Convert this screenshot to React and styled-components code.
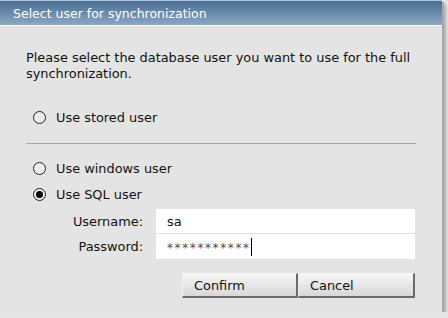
import React from "react";
import styled, { createGlobalStyle } from "styled-components";

const GlobalStyle = createGlobalStyle`
  html, body {
    margin: 0;
    padding: 0;
    background: #e6e6e6;
  }
  body {
    font-family: "DejaVu Sans", Verdana, sans-serif;
    font-size: 12.9px;
    color: #111;
  }
`;

const Dialog = styled.div`
  width: 442px;
  height: 312px;
  background: #e4e4e4;
  box-shadow: 2px 2px 0 #a8a8a8, 4px 4px 3px rgba(0, 0, 0, 0.25);
  display: flex;
  flex-direction: column;
`;

const TitleBar = styled.div`
  height: 24px;
  border-top: 1px solid #b4c4d6;
  border-bottom: 1px solid #ffffff;
  background: linear-gradient(#4b6e94, #8ba7c4);
  color: #ffffff;
  display: flex;
  align-items: center;
  padding-left: 13px;
  font-size: 12.5px;
`;

const Body = styled.div`
  padding: 24px 26px 0 26px;
  display: flex;
  flex-direction: column;
`;

const Spacer = styled.div`
  height: ${({ $h }) => $h}px;
  flex: none;
`;

const Intro = styled.p`
  margin: 0;
  line-height: 16px;
`;

const Separator = styled.hr`
  border: none;
  border-top: 1px solid #a9a9a9;
  margin: 0;
  width: 390px;
`;

const RadioRow = styled.label`
  display: flex;
  align-items: center;
  gap: 10px;
  height: 26px;
  padding-left: 7px;
`;

const RadioCircle = styled.span`
  width: 11px;
  height: 11px;
  border: 1px solid #222;
  border-radius: 50%;
  background: #ececec;
  display: flex;
  align-items: center;
  justify-content: center;
  &::after {
    content: "";
    width: 7px;
    height: 7px;
    border-radius: 50%;
    background: ${({ $checked }) => ($checked ? "#000" : "transparent")};
  }
`;

const Fields = styled.div`
  display: grid;
  grid-template-columns: 117px 259px;
  column-gap: 13px;
  margin-top: 2px;
`;

const FieldLabel = styled.div`
  height: 25px;
  display: flex;
  align-items: center;
  justify-content: flex-end;
`;

const FieldBox = styled.div`
  background: #ffffff;
  height: ${({ $first }) => ($first ? "24px" : "25px")};
  border-bottom: ${({ $first }) => ($first ? "1px solid #e2e2e2" : "none")};
  display: flex;
  align-items: center;
  padding-left: 11px;
`;

const Stars = styled.span`
  font-size: 12px;
  letter-spacing: 1.6px;
  color: #5a4a3a;
  border-right: 1px solid #000;
  line-height: 16px;
  padding-top: 2px;
`;

const Buttons = styled.div`
  display: flex;
  justify-content: flex-end;
  margin-top: 14px;
  width: 389px;
`;

const Button = styled.button`
  width: ${({ $w }) => $w}px;
  height: 25px;
  font: inherit;
  color: #111;
  text-align: left;
  padding-left: 11px;
  border: none;
  border-top: 1px solid #f8f8f8;
  border-left: 1px solid #f0f0f0;
  border-right: 2px solid #6a6a6a;
  border-bottom: 2px solid #6a6a6a;
  background: linear-gradient(#f6f6f6, #d8d8d8);
`;

export default function App() {
  return (
    <>
      <GlobalStyle />
      <Dialog>
        <TitleBar>Select user for synchronization</TitleBar>
        <Body>
          <Intro>
            Please select the database user you want to use for the full
            synchronization.
          </Intro>
          <Spacer $h={22} />
          <RadioRow>
            <RadioCircle />
            Use stored user
          </RadioRow>
          <Spacer $h={13} />
          <Separator />
          <Spacer $h={11} />
          <RadioRow>
            <RadioCircle />
            Use windows user
          </RadioRow>
          <RadioRow>
            <RadioCircle $checked />
            Use SQL user
          </RadioRow>
          <Fields>
            <FieldLabel>Username:</FieldLabel>
            <FieldBox $first>sa</FieldBox>
            <FieldLabel>Password:</FieldLabel>
            <FieldBox>
              <Stars>***********</Stars>
            </FieldBox>
          </Fields>
          <Buttons>
            <Button $w={116}>Confirm</Button>
            <Button $w={117}>Cancel</Button>
          </Buttons>
        </Body>
      </Dialog>
    </>
  );
}
